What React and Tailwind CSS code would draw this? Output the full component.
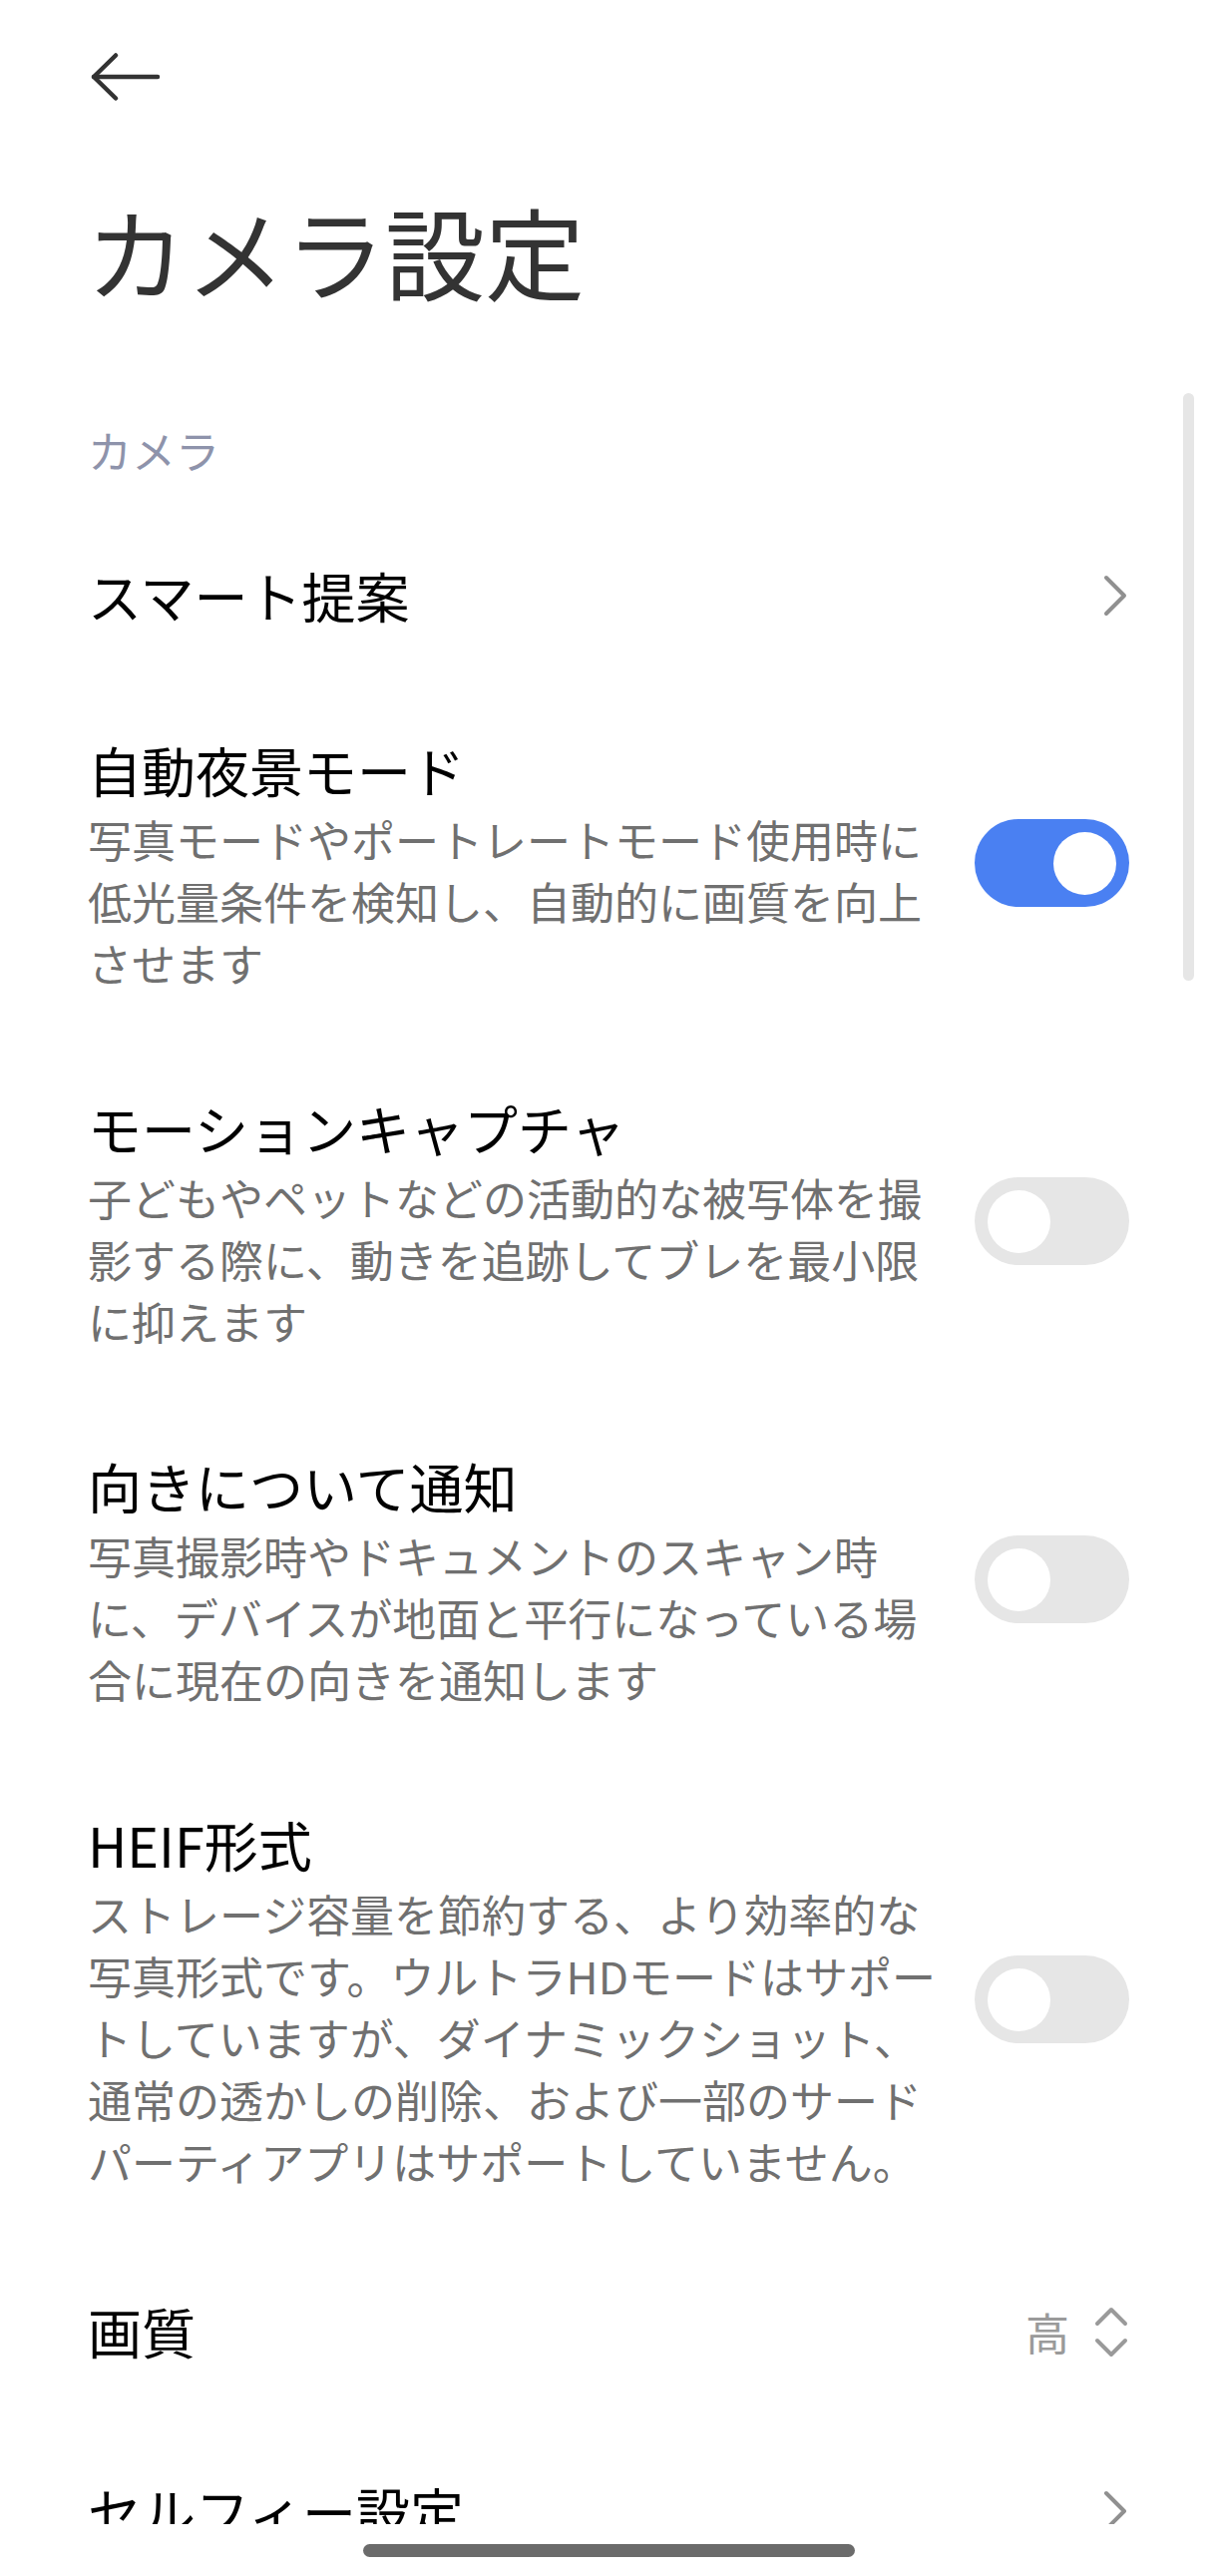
import React from 'react';

const font = { fontFamily: '"Noto Sans CJK JP", "Noto Sans", sans-serif' };

const toggleRows = [
  {
    title: '自動夜景モード',
    desc: '写真モードやポートレートモード使用時に低光量条件を検知し、自動的に画質を向上させます',
    on: true,
  },
  {
    title: 'モーションキャプチャ',
    desc: '子どもやペットなどの活動的な被写体を撮影する際に、動きを追跡してブレを最小限に抑えます',
    on: false,
  },
  {
    title: '向きについて通知',
    desc: '写真撮影時やドキュメントのスキャン時に、デバイスが地面と平行になっている場合に現在の向きを通知します',
    on: false,
  },
  {
    title: 'HEIF形式',
    desc: 'ストレージ容量を節約する、より効率的な写真形式です。ウルトラHDモードはサポートしていますが、ダイナミックショット、通常の透かしの削除、および一部のサードパーティアプリはサポートしていません。',
    on: false,
  },
];

function Toggle({ on }) {
  return on ? (
    <div className="flex h-[88px] w-[155px] shrink-0 items-center justify-end rounded-full bg-[#4a80f2] pr-[13px]">
      <div className="h-[63px] w-[63px] rounded-full bg-white" />
    </div>
  ) : (
    <div className="flex h-[88px] w-[155px] shrink-0 items-center justify-start rounded-full bg-[#e6e6e6] pl-[13px]">
      <div className="h-[63px] w-[63px] rounded-full bg-white" />
    </div>
  );
}

function Chevron() {
  return (
    <svg width="28" height="44" viewBox="0 0 28 44" fill="none">
      <polyline points="5,4 23,22 5,40" stroke="#909090" strokeWidth="4" strokeLinecap="round" strokeLinejoin="round" />
    </svg>
  );
}

function UpDown() {
  return (
    <svg width="36" height="60" viewBox="0 0 36 60" fill="none">
      <polyline points="4,22 18,8 32,22" stroke="#9a9a9a" strokeWidth="4" strokeLinecap="round" strokeLinejoin="round" />
      <polyline points="4,39 18,53 32,39" stroke="#9a9a9a" strokeWidth="4" strokeLinecap="round" strokeLinejoin="round" />
    </svg>
  );
}

function LinkRow({ title, children }) {
  return (
    <div className="flex h-[180px] items-center justify-between pl-[88px] pr-[88px]">
      <span className="text-[54px] leading-[76px] text-black">{title}</span>
      {children}
    </div>
  );
}

export default function App() {
  return (
    <div className="relative h-[2582px] w-[1220px] overflow-hidden bg-white" style={font}>
      {/* ── scrolling content ── */}
      <div className="h-[2530px] overflow-hidden">
        <div className="h-[191px] pl-[90px] pt-[49px]">
          <svg width="76" height="56" viewBox="0 0 76 56" fill="none">
            <line x1="4" y1="28" x2="68" y2="28" stroke="#333333" strokeWidth="4.5" strokeLinecap="round" />
            <polyline points="26,6.5 4,28 26,49.5" stroke="#333333" strokeWidth="4.5" strokeLinecap="round" strokeLinejoin="round" />
          </svg>
        </div>

        <h1 className="pl-[86px] text-[100px] font-normal leading-[120px] text-[#333333]">カメラ設定</h1>

        <div className="mt-[110px] pl-[88px] text-[44px] leading-[60px] text-[#8e93ab]">カメラ</div>

        <div className="mt-[26px]">
          <LinkRow title="スマート提案">
            <Chevron />
          </LinkRow>

          {toggleRows.map((row) => (
            <div key={row.title} className="flex items-center justify-between pl-[88px] pr-[88px] pt-[47px] pb-[50px]">
              <div className="w-[868px]">
                <div className="text-[54px] leading-[76px] text-black">{row.title}</div>
                <div className="text-[44px] leading-[62px] text-[#707070]">{row.desc}</div>
              </div>
              <Toggle on={row.on} />
            </div>
          ))}

          <LinkRow title="画質">
            <div className="flex items-center gap-[24px]">
              <span className="text-[44px] leading-[60px] text-[#9a9a9a]">高</span>
              <UpDown />
            </div>
          </LinkRow>

          <LinkRow title="セルフィー設定">
            <Chevron />
          </LinkRow>
        </div>
      </div>

      {/* ── gesture bar ── */}
      <div className="flex h-[52px] justify-center pt-[20px]">
        <div className="h-[13px] w-[493px] rounded-full bg-[#6b6b6b]" />
      </div>

      {/* scroll indicator */}
      <div className="absolute left-[1186px] top-[394px] h-[589px] w-[11px] rounded-full bg-[#e6e6e6]" />
    </div>
  );
}
